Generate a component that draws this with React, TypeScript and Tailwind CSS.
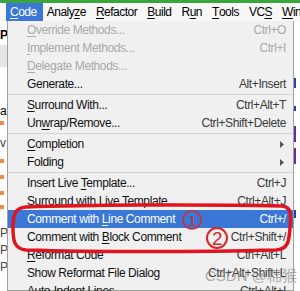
type Item =
  | { kind: 'sep' }
  | {
      kind: 'item';
      pre: string;
      mn?: string;
      post?: string;
      shortcut?: string;
      disabled?: boolean;
      active?: boolean;
      submenu?: boolean;
    };

const menuBar: { pre: string; mn: string; post: string; active?: boolean }[] = [
  { pre: '', mn: 'C', post: 'ode', active: true },
  { pre: 'Analy', mn: 'z', post: 'e' },
  { pre: '', mn: 'R', post: 'efactor' },
  { pre: '', mn: 'B', post: 'uild' },
  { pre: 'R', mn: 'u', post: 'n' },
  { pre: '', mn: 'T', post: 'ools' },
  { pre: 'VC', mn: 'S', post: '' },
  { pre: '', mn: 'W', post: 'indow' }
];

const items: Item[] = [
  { kind: 'item', pre: '', mn: 'O', post: 'verride Methods...', shortcut: 'Ctrl+O', disabled: true },
  { kind: 'item', pre: '', mn: 'I', post: 'mplement Methods...', shortcut: 'Ctrl+I', disabled: true },
  { kind: 'item', pre: '', mn: 'D', post: 'elegate Methods...', disabled: true },
  { kind: 'item', pre: 'Generate...', shortcut: 'Alt+Insert' },
  { kind: 'sep' },
  { kind: 'item', pre: '', mn: 'S', post: 'urround With...', shortcut: 'Ctrl+Alt+T' },
  { kind: 'item', pre: 'Un', mn: 'w', post: 'rap/Remove...', shortcut: 'Ctrl+Shift+Delete' },
  { kind: 'sep' },
  { kind: 'item', pre: '', mn: 'C', post: 'ompletion', submenu: true },
  { kind: 'item', pre: 'Folding', submenu: true },
  { kind: 'sep' },
  { kind: 'item', pre: 'Insert Live ', mn: 'T', post: 'emplate...', shortcut: 'Ctrl+J' },
  { kind: 'item', pre: 'Surround with Live Template...', shortcut: 'Ctrl+Alt+J' },
  { kind: 'item', pre: 'Comment with ', mn: 'L', post: 'ine Comment', shortcut: 'Ctrl+/', active: true },
  { kind: 'item', pre: 'Comment with ', mn: 'B', post: 'lock Comment', shortcut: 'Ctrl+Shift+/' },
  { kind: 'item', pre: '', mn: 'R', post: 'eformat Code', shortcut: 'Ctrl+Alt+L' },
  { kind: 'item', pre: 'Show Reformat File Dialog', shortcut: 'Ctrl+Alt+Shift+L' },
  { kind: 'item', pre: 'Auto-Indent Lines', shortcut: 'Ctrl+Alt+I' }
];

// bits of the editor that peek out left of the popup
const gutter: { h: number; text?: string; cls?: string }[] = [
  { h: 8 },
  { h: 14, text: 'P', cls: 'font-bold text-black' },
  { h: 2 },
  { h: 22, cls: 'bg-[#e6e6e6]' },
  { h: 38 },
  { h: 16, text: 'a', cls: 'text-black' },
  { h: 4, cls: 'w-[4px] bg-[#f08a4b]' },
  { h: 12 },
  { h: 12, text: 'v', cls: 'text-[#444]' },
  { h: 10 },
  { h: 4, cls: 'w-[4px] bg-[#f08a4b]' },
  { h: 12 },
  { h: 4, cls: 'w-[4px] bg-[#f08a4b]' },
  { h: 12 },
  { h: 4, cls: 'w-[4px] bg-[#f08a4b]' },
  { h: 10 },
  { h: 4, cls: 'w-[4px] bg-[#f08a4b]' },
  { h: 18 },
  { h: 17, text: 'P', cls: 'text-[#444]' },
  { h: 17, text: 'P', cls: 'text-[#444]' },
  { h: 17, text: 'P', cls: 'text-[#444]' }
];

function Row({ item }: { item: Extract<Item, { kind: 'item' }> }) {
  const color = item.active ? 'text-white' : item.disabled ? 'text-[#a9a9a9]' : 'text-[#111]';
  const scColor = item.active ? 'text-white' : item.disabled ? 'text-[#a9a9a9]' : 'text-[#3a3a3a]';
  return (
    <div
      className={`h-[18px] flex items-center justify-between pl-[19px] pr-[7px] ${
        item.active ? 'bg-[#3a77d6]' : ''
      }`}
    >
      <span className={`whitespace-nowrap ${color}`}>
        {item.pre}
        {item.mn && <span className="underline underline-offset-2">{item.mn}</span>}
        {item.post}
      </span>
      {item.shortcut && <span className={`whitespace-nowrap ${scColor}`}>{item.shortcut}</span>}
      {item.submenu && (
        <svg width="4" height="7" viewBox="0 0 4 7" className="mr-[2px]">
          <path d="M0 0 L4 3.5 L0 7 Z" fill="#555" />
        </svg>
      )}
    </div>
  );
}

export default function App() {
  return (
    <div
      className="relative w-[300px] h-[291px] overflow-hidden bg-white text-[12px] tracking-[-0.4px] leading-none"
      style={{ fontFamily: '"Liberation Sans", "Noto Sans CJK SC", sans-serif' }}
    >
      <div className="h-[3px] bg-[#3aa53a]" />
      <div className="h-[18px] flex items-stretch bg-[#f7f7f7] pl-[6px] text-[12px] tracking-[-0.5px] text-black">
        {menuBar.map((m) => (
          <div
            key={m.pre + m.mn + m.post}
            className={`flex items-center pl-[4px] pr-[6px] whitespace-nowrap ${
              m.active ? 'bg-[#3a77d6] text-white' : ''
            }`}
          >
            {m.pre}
            <span className="underline underline-offset-2">{m.mn}</span>
            {m.post}
          </div>
        ))}
      </div>

      <div className="flex h-[270px]">
        <div className="w-[7px] flex flex-col overflow-hidden text-[12px] leading-none">
          {gutter.map((g, i) => (
            <div key={i} style={{ height: g.h }} className={`shrink-0 ${g.cls ?? ''}`}>
              {g.text}
            </div>
          ))}
        </div>

        <div className="w-[287px] bg-[#f0f0f0] border border-t-0 border-[#a0a0a0] shadow-[2px_2px_2px_rgba(0,0,0,0.25)]">
          {items.map((it, i) =>
            it.kind === 'sep' ? (
              <div key={i} className="h-[3px] flex items-center">
                <div className="h-px w-full bg-[#d5d5d5]" />
              </div>
            ) : (
              <Row key={i} item={it} />
            )
          )}
        </div>

        <div className="flex-1 flex flex-col bg-white">
          <div className="h-[57px]" />
          <div className="h-[10px] w-[2px] bg-[#2244aa]" />
          <div className="h-[18px]" />
          <div className="h-[5px] w-[2px] bg-[#2244aa]" />
          <div className="h-[15px]" />
          <div className="h-[16px] w-[2px] bg-[#6a2a9a]" />
          <div className="h-[6px]" />
          <div className="h-[16px] w-[2px] bg-[#6a2a9a]" />
          <div className="h-[46px]" />
          <div className="h-[8px] w-[2px] bg-[#2244aa]" />
        </div>
      </div>

      {/* red annotation drawn over the menu */}
      <svg className="absolute left-0 top-0 pointer-events-none" width="300" height="291" viewBox="0 0 300 291">
        <path
          d="M26 207 C 80 205, 200 204, 282 206 C 292 207, 291 215, 290 228 C 289 242, 288 249, 276 250 C 200 252, 90 252, 26 250 C 14 249, 13 240, 13 228 C 13 214, 15 208, 26 207 Z"
          fill="none"
          stroke="#e0141e"
          strokeWidth="3.5"
        />
        <circle cx="192" cy="220" r="9" fill="none" stroke="#d9262b" strokeWidth="1.5" />
        <circle cx="217" cy="238" r="10" fill="none" stroke="#d9262b" strokeWidth="2" />
      </svg>
      <div className="absolute left-[183px] top-[211px] w-[18px] h-[18px] flex items-center justify-center text-[15px] text-[#d9262b]">
        1
      </div>
      <div className="absolute left-[207px] top-[228px] w-[20px] h-[20px] flex items-center justify-center text-[19px] text-[#d9262b]">
        2
      </div>

      <div className="absolute left-[205px] top-[268px] text-[15px] tracking-normal text-[#8a8a8a]/70 whitespace-nowrap">
        CSDN @棉猴
      </div>
    </div>
  );
}
